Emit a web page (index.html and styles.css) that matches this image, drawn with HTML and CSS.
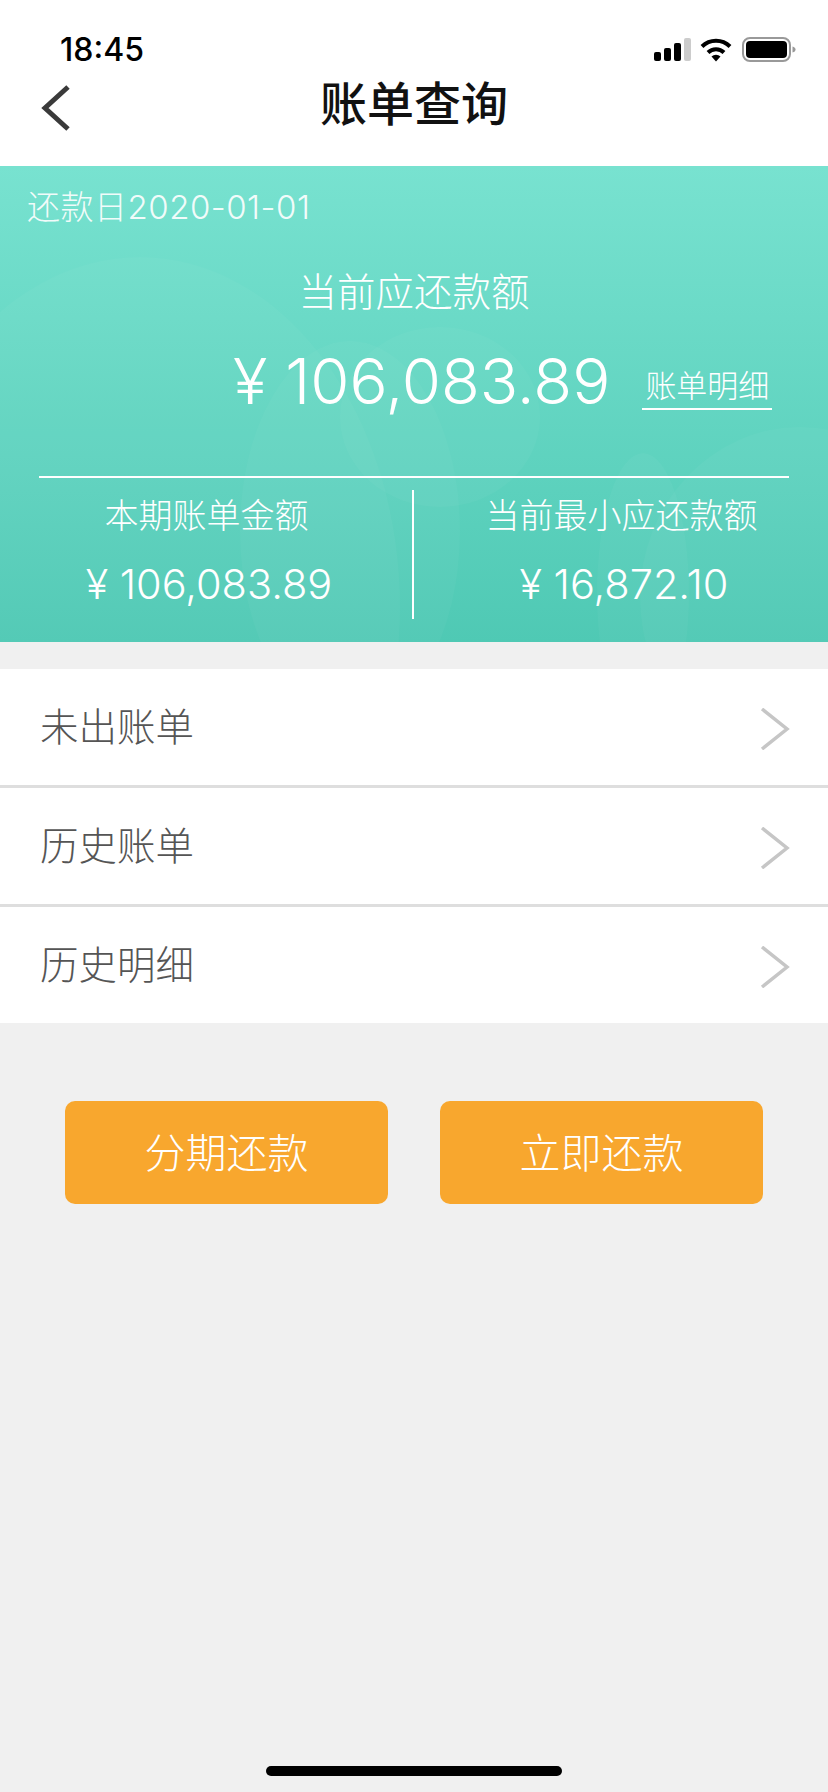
FILE: index.html
```html
<!DOCTYPE html>
<html lang="zh">
<head>
<meta charset="utf-8">
<title>账单查询</title>
<link rel="stylesheet" href="styles.css">
</head>
<body>
<div class="page">
  <header class="top">
    <div class="status">
      <span class="time">18:45</span>
      <div class="status-icons">
        <svg class="signal" width="38" height="24" viewBox="0 0 38 24"><rect x="0" y="14" width="7" height="9" rx="2" fill="#000"/><rect x="10" y="10" width="7" height="13" rx="2" fill="#000"/><rect x="20" y="5" width="7" height="18" rx="2" fill="#000"/><rect x="30" y="0" width="7" height="23" rx="2" fill="#ccc"/></svg>
        <svg class="wifi" width="32" height="24" viewBox="0 0 32 24"><path d="M2 8.500a20 20 0 0 1 28 0" fill="none" stroke="#000" stroke-width="4"/><path d="M8 14.500a11.500 11.500 0 0 1 16 0" fill="none" stroke="#000" stroke-width="4"/><path d="M11.500 18.500a6.500 6.500 0 0 1 9 0L16 23.500z" fill="#000"/></svg>
        <svg class="battery" width="54" height="26" viewBox="0 0 54 26"><rect x="1" y="1" width="47" height="23" rx="7" fill="none" stroke="#999" stroke-width="2"/><rect x="4" y="4" width="41" height="17" rx="4" fill="#000"/><path d="M50.500 9.500c2 .5 3 1.500 3 3s-1 2.500-3 3z" fill="#999"/></svg>
      </div>
    </div>
    <div class="nav">
      <svg class="back" width="32" height="46" viewBox="0 0 32 46"><path d="M28 2 5 23l23 21" fill="none" stroke="#3a3a3a" stroke-width="5"/></svg>
      <h1 class="title">账单查询</h1>
    </div>
  </header>

  <section class="hero">
    <div class="blob blob-a"></div>
    <div class="blob blob-b"></div>
    <div class="blob blob-e"></div>
    <div class="blob blob-c"></div>
    <div class="blob blob-d"></div>
    <div class="due">还款日2020-01-01</div>
    <div class="cur-label">当前应还款额</div>
    <div class="cur-row">
      <span class="cur-amount">¥ 106,083.89</span>
      <a class="detail">账单明细</a>
    </div>
    <div class="split">
      <div class="cell cell-left">
        <div class="cell-label">本期账单金额</div>
        <div class="cell-amount">¥ 106,083.89</div>
      </div>
      <div class="cell cell-right">
        <div class="cell-label">当前最小应还款额</div>
        <div class="cell-amount">¥ 16,872.10</div>
      </div>
    </div>
  </section>

  <ul class="list">
    <li class="row"><span>未出账单</span><svg class="chev" width="30" height="42" viewBox="0 0 30 42"><path d="M2 1l25 20L2 41" fill="none" stroke="#c6c6c6" stroke-width="3.500"/></svg></li>
    <li class="row"><span>历史账单</span><svg class="chev" width="30" height="42" viewBox="0 0 30 42"><path d="M2 1l25 20L2 41" fill="none" stroke="#c6c6c6" stroke-width="3.500"/></svg></li>
    <li class="row"><span>历史明细</span><svg class="chev" width="30" height="42" viewBox="0 0 30 42"><path d="M2 1l25 20L2 41" fill="none" stroke="#c6c6c6" stroke-width="3.500"/></svg></li>
  </ul>

  <div class="actions">
    <button class="btn">分期还款</button>
    <button class="btn">立即还款</button>
  </div>

  <div class="home"></div>
</div>
</body>
</html>
```

FILE: styles.css
```css
* { box-sizing: border-box; }
html, body { margin: 0; padding: 0; }
body {
  font-family: Inter, "Noto Sans CJK SC", "Noto Sans", sans-serif;
  background: #f0f0f0;
}
.page {
  width: 828px;
  height: 1792px;
  display: flex;
  flex-direction: column;
  background: #f0f0f0;
  overflow: hidden;
}
.top { background: #fff; height: 166px; }
.status {
  height: 76px;
  padding: 24px 32px 0 60px;
  display: flex;
  justify-content: space-between;
  align-items: center;
}
.time {
  font-size: 32px;
  font-weight: 500;
  color: #000;
  line-height: 1;
}
.status-icons { display: flex; align-items: center; gap: 10px; }
.signal { margin-right: -2px; }
.nav {
  height: 56px;
  display: flex;
  align-items: center;
  justify-content: center;
  position: relative;
}
.back { position: absolute; left: 40px; top: 9px; }
.title {
  margin: 0;
  font-size: 47px;
  font-weight: 500;
  line-height: 56px;
  color: #111;
}
.hero {
  position: relative;
  height: 476px;
  overflow: hidden;
  color: #fff;
  background: linear-gradient(180deg, #78e2d0 0%, #4fc9b4 100%);
  display: flex;
  flex-direction: column;
}
.hero > * { position: relative; }
.hero > .blob {
  position: absolute;
  border-radius: 50%;
  background: rgba(255, 255, 255, 0.03);
}
.blob-a { left: -120px; top: 91px; width: 520px; height: 700px; }
.blob-b { left: 240px; top: 175px; width: 220px; height: 380px; }
.blob-e { left: 340px; top: 161px; width: 200px; height: 180px; }
.blob-c { left: 597px; top: 287px; width: 92px; height: 280px; }
.blob-d { left: 640px; top: 261px; width: 320px; height: 340px; }
.due {
  padding: 20px 0 0 27px;
  font-size: 33px;
  font-weight: 300;
  line-height: 42px;
  letter-spacing: .5px;
  opacity: .9;
}
.cur-label {
  margin-top: 39px;
  text-align: center;
  font-size: 38.500px;
  font-weight: 300;
  line-height: 50px;
}
.cur-row {
  height: 72px;
  margin-top: 28px;
  padding-left: 233px;
  display: flex;
  align-items: center;
  gap: 32px;
}
.cur-amount {
  font-size: 63.500px;
  font-weight: 300;
  line-height: 72px;
  white-space: nowrap;
}
.detail {
  margin-top: 14px;
  width: 130px;
  padding-bottom: 2px;
  text-align: center;
  font-size: 31px;
  font-weight: 300;
  line-height: 40px;
  white-space: nowrap;
  border-bottom: 2px solid #fff;
}
.split {
  margin: 59px 39px 0 39px;
  padding-top: 12px;
  border-top: 2px solid #fff;
  display: flex;
}
.cell {
  height: 129px;
  text-align: center;
}
.cell-left {
  width: 373px;
  padding-right: 38px;
}
.cell-right {
  flex: 1;
  padding-left: 40px;
  border-left: 2px solid #fff;
}
.cell-label {
  padding-top: 2px;
  font-size: 34px;
  font-weight: 300;
  line-height: 48px;
}
.cell-amount {
  margin-top: 19px;
  padding-left: 5px;
  font-size: 41.500px;
  font-weight: 300;
  line-height: 50px;
}
.list {
  margin: 27px 0 0;
  padding: 0;
  list-style: none;
  background: #fff;
}
.row {
  height: 119px;
  padding: 0 38px 0 40px;
  display: flex;
  align-items: center;
  justify-content: space-between;
  font-size: 38.500px;
  font-weight: 300;
  color: #555;
  border-bottom: 3px solid #dedede;
}
.row:last-child { height: 116px; border-bottom: 0; }
.row span { margin-top: -7px; }
.chev { margin-top: 3px; }
.actions {
  margin-top: 78px;
  padding: 0 65px;
  display: flex;
  justify-content: space-between;
}
.btn {
  width: 323px;
  height: 103px;
  border: 0;
  border-radius: 10px;
  background: #f8a72e;
  color: #fff;
  font-family: inherit;
  font-size: 41px;
  font-weight: 300;
  padding-bottom: 6px;
}
.home {
  margin: auto auto 16px;
  width: 296px;
  height: 10px;
  border-radius: 5px;
  background: #000;
}
```
